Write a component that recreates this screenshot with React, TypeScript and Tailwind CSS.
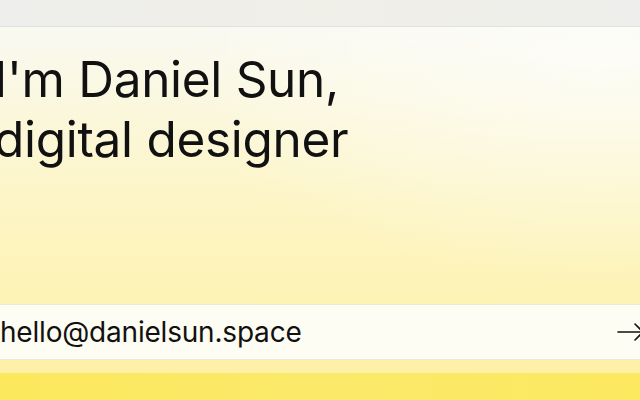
export default function App() {
  return (
    <div
      className="w-[640px] h-[400px] overflow-hidden flex flex-col bg-[#fbe862] text-[#111111]"
      style={{ fontFamily: "Inter, 'Noto Sans', sans-serif" }}
    >
      {/* top strip */}
      <div className="h-[26px] shrink-0 bg-linear-to-r from-[#eeeeec] via-[#f0efe8] to-[#eeeeec]" />

      {/* card */}
      <div className="h-[347px] shrink-0 -mx-[12px] flex flex-col border-t border-[#e2e2dc] bg-linear-to-b from-[#f9f9f1] via-[#fdf5c6] via-50% to-[#fdf1a8]">
        <div className="flex-1 bg-[radial-gradient(ellipse_at_92%_8%,rgba(255,255,255,0.6),transparent_50%)] flex flex-col">
          <h1 className="pt-[22px] pl-[6px] text-[49.5px] leading-[60px] font-normal tracking-[-0.3px]">
            I'm Daniel Sun,
            <br />
            digital designer
          </h1>

          <div className="mt-auto mb-[13px] h-[56px] flex items-center justify-between border border-[#ecead6] rounded-[10px] bg-[#fefdf3] pl-[11px] pr-[6px]">
            <span className="text-[28px] leading-none tracking-[-0.2px]">hello@danielsun.space</span>
            <svg width="28" height="20" viewBox="0 0 28 20" fill="none" stroke="currentColor" strokeWidth="1.6" strokeLinecap="round" strokeLinejoin="round">
              <path d="M1 10h25" />
              <path d="M18 2l8 8-8 8" />
            </svg>
          </div>
        </div>
      </div>

      {/* bottom band */}
      <div className="flex-1 bg-linear-to-r from-[#fce85c] via-[#fbe96a] to-[#fce960]" />
    </div>
  );
}
